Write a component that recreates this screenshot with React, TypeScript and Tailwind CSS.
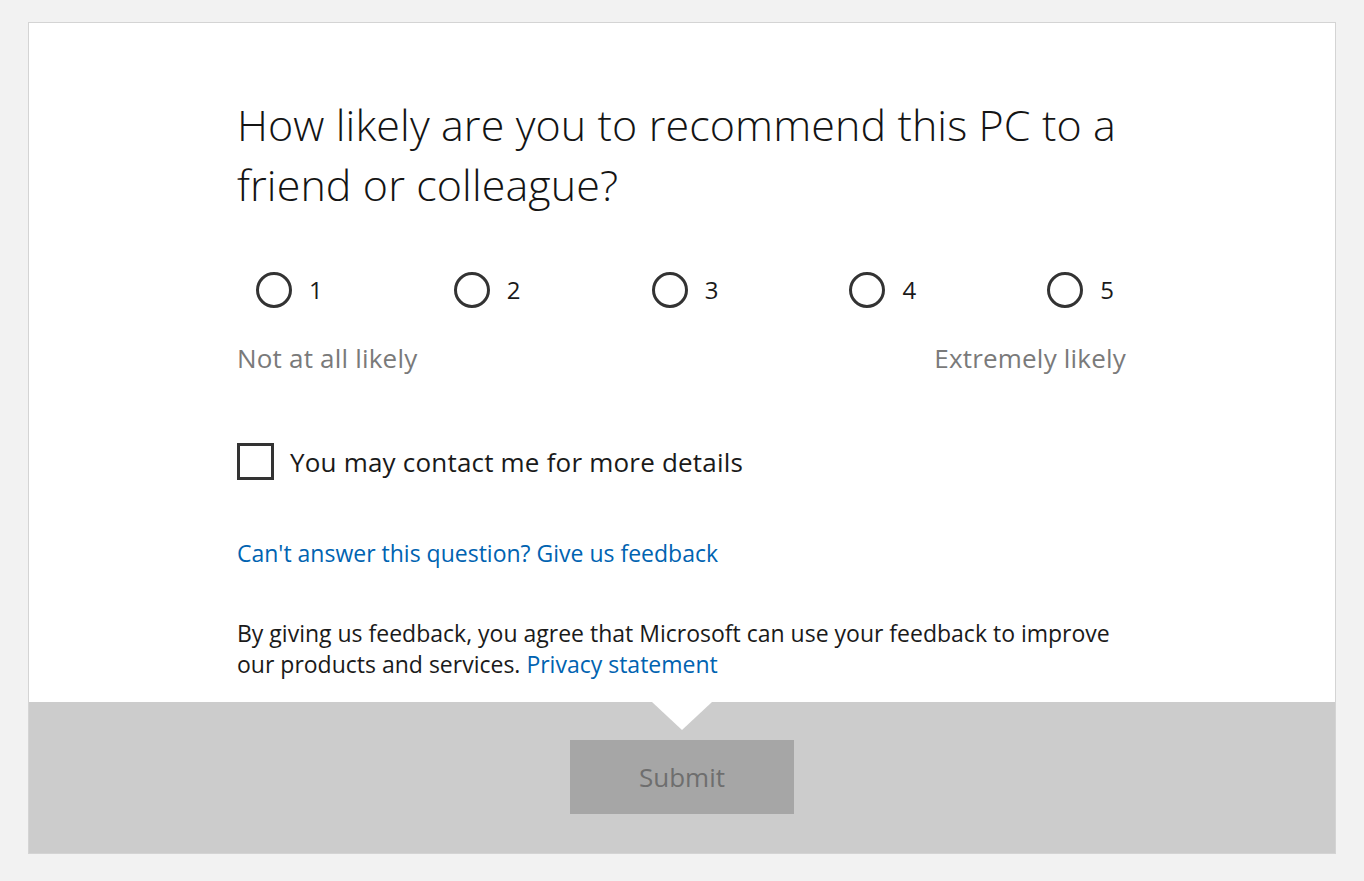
import React from 'react';

const font = { fontFamily: '"Open Sans", "Noto Sans", sans-serif' };

const Radio = ({ n }: { n: number }) => (
  <label className="flex items-center gap-[17px] cursor-pointer">
    <span className="w-[36px] h-[36px] rounded-full border-[3px] border-[#333333] bg-white" />
    <span className="text-[24px] leading-none text-[#1a1a1a]">{n}</span>
  </label>
);

const App = () => {
  return (
    <div className="min-h-screen bg-[#f2f2f2] pt-[22px] pl-[28px]" style={font}>
      <div className="w-[1308px] h-[832px] border border-[#d4d4d4] bg-white flex flex-col">
        <div className="flex-1 pl-[208px] pr-[209px] pt-[72px]">
          <h1 className="text-[43px] leading-[60px] text-[#141414] font-light tracking-[0.1px]">
            How likely are you to recommend this PC to a friend or colleague?
          </h1>

          <div className="mt-[57px] flex justify-between pl-[19px] pr-[12px]">
            {[1, 2, 3, 4, 5].map((n) => (
              <Radio key={n} n={n} />
            ))}
          </div>

          <div className="mt-[34px] flex justify-between text-[26px] leading-[32px] text-[#7a7a7a] tracking-[0.2px]">
            <span>Not at all likely</span>
            <span>Extremely likely</span>
          </div>

          <label className="mt-[69px] flex items-center gap-[16px]">
            <span className="w-[37px] h-[37px] border-[3px] border-[#333333] bg-white" />
            <span className="text-[26px] leading-[32px] text-[#1a1a1a] tracking-[0.2px]">You may contact me for more details</span>
          </label>

          <a className="mt-[58px] block text-[23px] leading-[30px] text-[#0063b1]">
            Can't answer this question? Give us feedback
          </a>

          <p className="mt-[50px] text-[23px] leading-[31px] text-[#1a1a1a]">
            By giving us feedback, you agree that Microsoft can use your feedback to improve our products and services.{' '}
            <a className="text-[#0063b1]">Privacy statement</a>
          </p>
        </div>

        <div className="relative h-[151px] bg-[#cccccc] flex justify-center pt-[38px]">
          <svg className="absolute left-[623px] top-0" width="60" height="28" viewBox="0 0 60 28">
            <polygon points="0,0 60,0 30,28" fill="#ffffff" />
          </svg>
          <button className="w-[224px] h-[74px] bg-[#a6a6a6] text-[26px] text-[#6e6e6e]" style={font}>
            Submit
          </button>
        </div>
      </div>
    </div>
  );
};

export default App;
